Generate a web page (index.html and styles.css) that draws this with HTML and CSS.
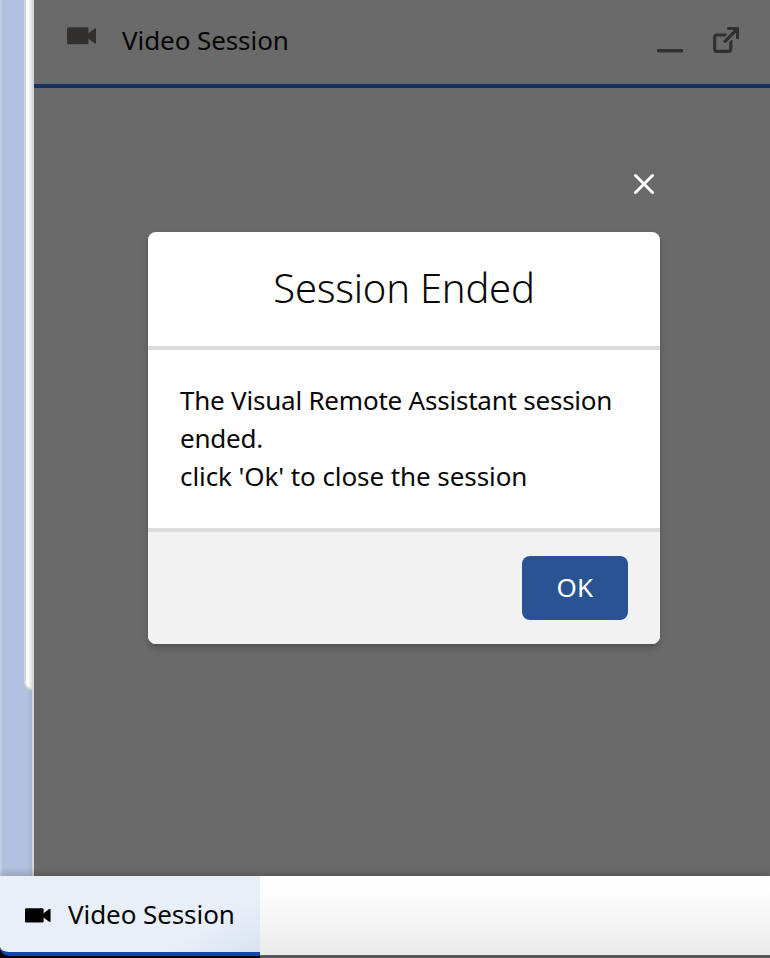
FILE: index.html
```html
<!DOCTYPE html>
<html lang="en">
<head>
<meta charset="utf-8">
<title>Video Session</title>
<link rel="stylesheet" href="styles.css">
</head>
<body>
<div class="app">
  <div class="workspace">
    <aside class="rail"><div class="card-edge"></div></aside>
    <section class="panel">
      <header class="panel-header">
        <svg class="camera" width="30" height="18" viewBox="0 0 30 18"><rect y=".3" width="21.5" height="17" rx="1.500"/><path d="M20.500 7.300 27.500 1.600Q29 .500 29 2V15.500Q29 17.500 27.500 16.200L20.500 10.800Z"/></svg>
        <h2 class="panel-title">Video Session</h2>
        <div class="panel-actions">
          <svg class="minimize" width="26" height="4" viewBox="0 0 26 4"><rect width="26" height="3.500" rx="1"/></svg>
          <svg class="popout" width="27" height="27" viewBox="0 0 27 27"><path class="line" d="M13.500 8H4Q1.700 8 1.700 10.300V22Q1.700 24.300 4 24.300H15.500Q17.800 24.300 17.800 22V13"/><path class="gap" d="M11.500 15 21.500 5"/><path class="line arrow" d="M12 14.300 23 3.300"/><path d="M15 0H25Q26 0 26 1V12H24.200Q23 12 23 10.800V5.500L20.500 3.100H15.300Q14.200 3.100 14.200 2V0Z"/></svg>
        </div>
      </header>
      <div class="panel-body">
        <button class="close" aria-label="Close"><svg width="22" height="22" viewBox="0 0 22 22"><path d="M2.500 2.500 19.500 19.500M19.500 2.500 2.500 19.500"/></svg></button>
        <div class="modal" role="dialog">
          <div class="modal-header"><h1>Session Ended</h1></div>
          <div class="modal-body"><p>The Visual Remote Assistant session<br>ended.</p><p class="hint">click 'Ok' to close the session</p></div>
          <div class="modal-footer"><button class="ok">OK</button></div>
        </div>
      </div>
    </section>
  </div>
  <footer class="utility-bar">
    <div class="utility-item">
      <svg class="camera" width="26" height="15" viewBox="0 0 30 18" preserveAspectRatio="none"><rect y=".3" width="21.500" height="17" rx="1.500"/><path d="M20.500 7.300 27.500 1.600Q29.500 .500 29.500 2V15.500Q29.500 17.500 27.500 16.200L20.500 10.800Z"/></svg>
      <span>Video Session</span>
    </div>
    <div class="utility-rest"></div>
  </footer>
</div>
</body>
</html>
```
FILE: styles.css
```css
* { box-sizing: border-box; }
body { margin: 0; font-family: "Noto Sans", sans-serif; color: #080707; background: #000; }
h1, h2, p { margin: 0; font-weight: 400; }
button { border: 0; padding: 0; font: inherit; }
svg { display: block; flex: none; }
.app { width: 770px; height: 958px; display: flex; flex-direction: column; overflow: hidden; }
.workspace { height: 876px; flex: none; display: flex; }
.rail { width: 34px; flex: none; padding-left: 24px; border-right: 2px solid #d6d5d4; background: linear-gradient(90deg, #bfcce2 2px, #b0c1dd 2px, #b2c2df 27px, #a9b7d0 32px); }
.card-edge { height: 690px; border: 2px solid #d8d8d8; border-width: 0 0 2px 2px; border-bottom-left-radius: 8px; background: linear-gradient(90deg, #fff 2px, #dedede); }
.panel { flex: 1; background: #6a6a6a; }
.panel-header { height: 88px; display: flex; align-items: flex-start; padding-left: 33px; border-bottom: 4px solid #18325f; }
.panel-header svg { fill: #31302e; }
.panel-header .camera { margin-top: 27px; }
.panel-title { margin: 22px 0 0 25px; font-size: 26px; line-height: 36px; letter-spacing: -0.08px; }
.panel-actions { display: flex; margin-left: auto; padding-right: 30px; gap: 30px; }
.minimize { margin-top: 49px; }
.popout { margin-top: 27px; }
.panel-header .popout .line { fill: none; stroke: #31302e; stroke-width: 3.200; }
.popout .arrow { stroke-linecap: round; }
.panel-header .popout .gap { stroke: #6a6a6a; stroke-width: 6.800; }
.panel-body { width: 512px; margin-left: 114px; display: flex; flex-direction: column; padding-top: 85px; }
.close { align-self: flex-end; margin-right: 5px; background: none; }
.close path { fill: none; stroke: #fff; stroke-width: 3; stroke-linecap: round; }
.modal { margin-top: 37px; height: 412px; border-radius: 8px; overflow: hidden; background: #fff; box-shadow: 0 4px 6px rgba(0,0,0,.22); }
.modal-header { height: 118px; border-bottom: 4px solid #dddcdb; text-align: center; }
.modal-header h1 { padding-top: 30px; font-size: 40px; line-height: 52px; font-weight: 300; letter-spacing: -0.25px; }
.modal-body { height: 178px; padding: 31px 0 0 32px; font-size: 26px; line-height: 38px; letter-spacing: -0.22px; white-space: nowrap; }
.modal-body .hint { letter-spacing: -0.08px; }
.modal-footer { height: 116px; border-top: 4px solid #dddcdb; background: #f2f2f2; display: flex; justify-content: flex-end; padding: 24px 32px; }
.ok { width: 106px; height: 64px; padding-bottom: 3px; border-radius: 8px; background: #295392; color: #fff; font-size: 26px; letter-spacing: .3px; }
.utility-bar { height: 82px; position: relative; display: flex; box-shadow: 0 -2px 8px rgba(0,0,0,.22); }
.utility-rest { flex: 1; border-bottom: 3px solid #575757; background: linear-gradient(#fff, #fdfdfd 20%, #ebebeb); }
.utility-item { width: 260px; height: 80px; display: flex; align-items: center; padding-left: 25px; border-bottom: 4px solid #1247b2; border-bottom-left-radius: 9px; background: linear-gradient(150deg, #e8eff9 75%, #dae2f0); font-size: 26px; letter-spacing: -0.08px; }
.utility-item .camera { margin-top: 3px; }
.utility-item span { margin-left: 17px; }
```
